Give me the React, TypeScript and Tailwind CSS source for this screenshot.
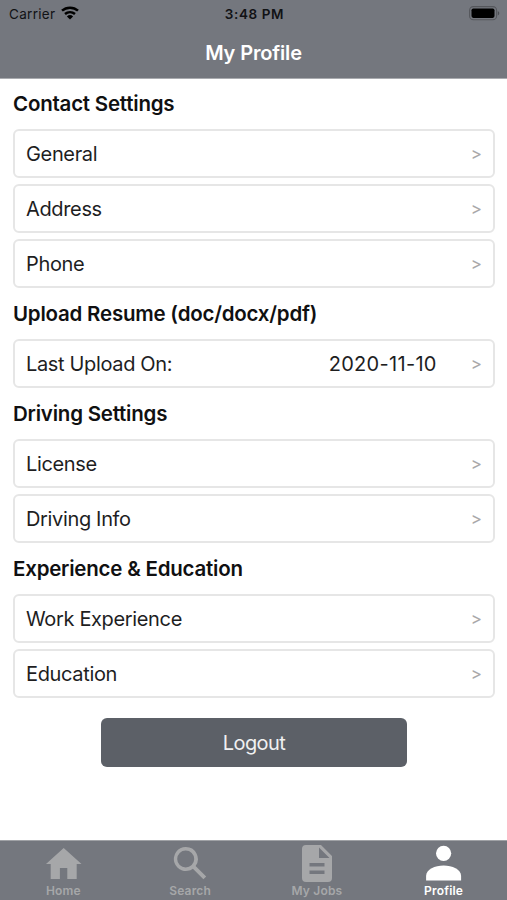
import type { JSX, ReactNode } from "react";

type Item = { label: string; value?: string };

const sections: { title: string; items: Item[] }[] = [
  {
    title: "Contact Settings",
    items: [{ label: "General" }, { label: "Address" }, { label: "Phone" }],
  },
  {
    title: "Upload Resume (doc/docx/pdf)",
    items: [{ label: "Last Upload On:", value: "2020-11-10" }],
  },
  {
    title: "Driving Settings",
    items: [{ label: "License" }, { label: "Driving Info" }],
  },
  {
    title: "Experience & Education",
    items: [{ label: "Work Experience" }, { label: "Education" }],
  },
];

function StatusBar(): JSX.Element {
  return (
    <div className="grid h-7 grid-cols-3 items-center pr-[7px] pl-[9px] text-[13.5px] text-[#111215]">
      <div className="flex items-center gap-[6px]">
        <span className="tracking-[0.3px]">Carrier</span>
        <svg
          className="-mt-[2px]"
          width="18"
          height="14"
          viewBox="0 0 18 14"
          fill="none"
        >
          <path
            d="M1 4.7C5.5.6 12.5.6 17 4.7M4 8c2.9-2.5 7.1-2.5 10 0"
            stroke="#000"
            strokeWidth="2.5"
          />
          <path d="M9 13.6 5.9 10.5a4.6 4.6 0 0 1 6.2 0z" fill="#000" />
        </svg>
      </div>
      <span className="text-center font-semibold tracking-[0.6px] whitespace-nowrap">
        3:48 PM
      </span>
      <svg
        className="-mt-[2px] justify-self-end"
        width="31"
        height="15"
        viewBox="0 0 31 15"
      >
        <rect
          x="0.6"
          y="0.6"
          width="27"
          height="13.2"
          rx="3.8"
          fill="#74777e"
          stroke="#55575c"
          strokeWidth="1.1"
        />
        <rect x="2.5" y="2.5" width="23" height="9.4" rx="1.8" fill="#000" />
        <path d="M28.8 5c2 .8 2 3.6 0 4.4z" fill="#4c4e53" />
      </svg>
    </div>
  );
}

function Row({ label, value }: Item): JSX.Element {
  return (
    <button className="flex h-[49px] w-full items-center rounded-md border-2 border-[#e6e6e6] bg-white pt-px pr-[11px] pl-[11px] text-left text-[20px] text-[#1e1e1f]">
      <span className="flex-1 tracking-[-0.35px]">{label}</span>
      {value && <span className="mr-[34px] tracking-[0.3px]">{value}</span>}
      <span className="pt-[2px] text-[17px] text-[#a9a9a9]">&gt;</span>
    </button>
  );
}

function Tab({
  label,
  active,
  children,
}: {
  label: string;
  active?: boolean;
  children: ReactNode;
}): JSX.Element {
  return (
    <button
      className={
        active
          ? "flex flex-col items-center text-white"
          : "flex flex-col items-center text-[#a6a7a9]"
      }
    >
      <svg width="40" height="40" viewBox="0 0 40 40" fill="currentColor">
        {children}
      </svg>
      <span className="text-[12px] leading-4 font-semibold tracking-[0.2px]">
        {label}
      </span>
    </button>
  );
}

export default function App(): JSX.Element {
  return (
    <div className="flex h-[900px] w-[507px] flex-col overflow-hidden bg-white font-['Inter','Liberation_Sans',sans-serif]">
      <header className="h-[79px] border-b border-[#a9abaf] bg-[#74777e]">
        <StatusBar />
        <h1 className="mt-[10px] text-center text-[20px] leading-[30px] font-semibold tracking-[-0.15px] text-white">
          My Profile
        </h1>
      </header>

      <main className="-mt-px flex flex-1 flex-col pr-3 pl-[13px]">
        {sections.map((section) => (
          <section key={section.title}>
            <h2 className="flex h-[51px] items-center pt-px text-[20.5px] font-semibold tracking-[-0.22px] text-[#101011]">
              {section.title}
            </h2>
            <div className="flex flex-col gap-1.5">
              {section.items.map((item) => (
                <Row key={item.label} {...item} />
              ))}
            </div>
          </section>
        ))}
        <button className="mt-5 h-[49px] w-[306px] self-center rounded-md bg-[#5c6067] pt-px text-[20px] tracking-[-0.6px] text-[#f0f0f1]">
          Logout
        </button>
      </main>

      <nav className="grid h-[60px] grid-cols-4 border-t border-[#a0a2a6] bg-[#74777e] pt-[2px]">
        <Tab label="Home">
          <path d="M20.7 5 38.5 21h-4.8v15h-9.4V25h-7.4v11H7.7V21H3z" />
        </Tab>
        <Tab label="Search">
          <path
            fillRule="evenodd"
            d="M15.7 4a12 12 0 1 0 7.2 21.7l10.5 10.6 2.8-2.8-10.6-10.5A12 12 0 0 0 15.7 4Zm0 3.6a8.5 8.5 0 1 1 0 17 8.5 8.5 0 0 1 0-17Z"
          />
        </Tab>
        <Tab label="My Jobs">
          <path
            fillRule="evenodd"
            d="M9 2h15l11 11v22a4 4 0 0 1-4 4H9a4 4 0 0 1-4-4V6a4 4 0 0 1 4-4Zm13 2.5V15h10.5ZM12.5 20v3.5h15V20Zm0 7.5V31h15v-3.5Z"
          />
        </Tab>
        <Tab label="Profile" active>
          <circle cx="19.6" cy="10.3" r="7.6" />
          <path d="M2.1 37.5v-4.7c0-6.6 9-10.3 17.5-10.3s17.5 3.7 17.5 10.3v4.7z" />
        </Tab>
      </nav>
    </div>
  );
}
